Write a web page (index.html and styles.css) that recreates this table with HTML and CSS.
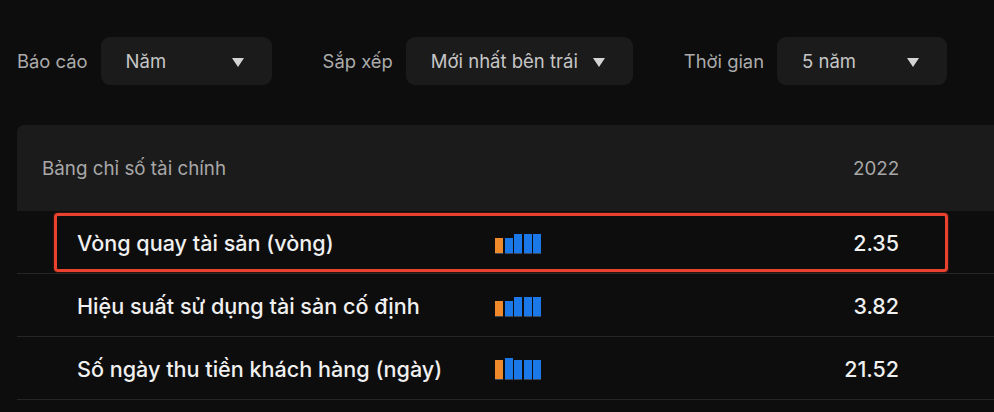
FILE: index.html
```html
<!DOCTYPE html>
<html lang="vi">
<head>
<meta charset="utf-8">
<title>Bảng chỉ số tài chính</title>
<link rel="stylesheet" href="styles.css">
</head>
<body>
<div class="page">
  <div class="filters">
    <div class="filter">
      <span class="filter-label">Báo cáo</span>
      <div class="select select-report"><span>Năm</span><span class="caret"></span></div>
    </div>
    <div class="filter">
      <span class="filter-label">Sắp xếp</span>
      <div class="select select-sort"><span>Mới nhất bên trái</span><span class="caret"></span></div>
    </div>
    <div class="filter">
      <span class="filter-label">Thời gian</span>
      <div class="select select-time"><span>5 năm</span><span class="caret"></span></div>
    </div>
  </div>

  <div class="table">
    <div class="thead">
      <span class="thead-title">Bảng chỉ số tài chính</span>
      <span class="thead-year">2022</span>
    </div>
    <div class="row">
      <div class="cell-box highlight">
        <span class="name">Vòng quay tài sản (vòng)</span>
        <span class="bars">
          <i class="bar orange" style="height:16px"></i><i class="bar" style="height:16px"></i><i class="bar" style="height:20px"></i><i class="bar" style="height:20px"></i><i class="bar" style="height:20px"></i>
        </span>
        <span class="value">2.35</span>
      </div>
    </div>
    <div class="row">
      <div class="cell-box">
        <span class="name">Hiệu suất sử dụng tài sản cố định</span>
        <span class="bars">
          <i class="bar orange" style="height:16px"></i><i class="bar" style="height:16px"></i><i class="bar" style="height:20px"></i><i class="bar" style="height:20px"></i><i class="bar" style="height:20px"></i>
        </span>
        <span class="value">3.82</span>
      </div>
    </div>
    <div class="row">
      <div class="cell-box">
        <span class="name">Số ngày thu tiền khách hàng (ngày)</span>
        <span class="bars">
          <i class="bar orange" style="height:20px"></i><i class="bar" style="height:22px"></i><i class="bar" style="height:20px"></i><i class="bar" style="height:20px"></i><i class="bar" style="height:20px"></i>
        </span>
        <span class="value">21.52</span>
      </div>
    </div>
  </div>
</div>
</body>
</html>
```

FILE: styles.css
```css
* { box-sizing: border-box; }

html, body {
  margin: 0;
  padding: 0;
  background: #0d0d0d;
  overflow: hidden;
}

body {
  font-family: Inter, "Noto Sans", "Liberation Sans", sans-serif;
  color: #e8e8e8;
  width: 994px;
  height: 412px;
}

.page {
  padding: 37px 0 0 17px;
}

.filters {
  display: flex;
  align-items: center;
  gap: 51px;
  height: 48px;
}

.filter {
  display: flex;
  align-items: center;
  gap: 13px;
  flex-shrink: 0;
}

.filter-label {
  font-size: 18.4px;
  color: #ababab;
  white-space: nowrap;
  flex-shrink: 0;
}

.select {
  height: 48px;
  background: #1b1b1b;
  border-radius: 9px;
  display: flex;
  align-items: center;
  justify-content: space-between;
  padding: 0 28px 0 25px;
  font-size: 18.5px;
  color: #c6c6c6;
  white-space: nowrap;
  flex-shrink: 0;
}

.select-report { width: 171px; }
.select-sort { width: 227px; }
.select-time { width: 170px; }

.caret {
  width: 0;
  height: 0;
  border-left: 6.5px solid transparent;
  border-right: 6.5px solid transparent;
  border-top: 9px solid #d4d4d4;
  margin-top: 2px;
}

.table {
  margin-top: 40px;
  width: 977px;
}

.thead {
  height: 86px;
  background: #1b1b1b;
  border-radius: 7px 0 0 0;
  display: flex;
  align-items: center;
  padding-left: 25px;
}

.thead-title {
  font-size: 18.8px;
  color: #a8a8a8;
  width: 811px;
}

.thead-year {
  font-size: 18.8px;
  color: #a8a8a8;
  width: 46px;
  text-align: right;
}

.row {
  height: 63px;
  border-bottom: 1px solid #262626;
  padding: 2px 0 1px 37px;
}

.cell-box {
  width: 894px;
  height: 59px;
  border: 3px solid transparent;
  border-radius: 4px;
  display: grid;
  grid-template-columns: 418px 1fr auto;
  align-items: center;
  padding: 0 46px 0 20px;
}

.cell-box.highlight {
  border-color: #e8412e;
  box-shadow: 0 0 2px rgba(232, 65, 46, 0.6);
}

.name {
  font-size: 21.6px;
  font-weight: 500;
  color: #f0f0f0;
  white-space: nowrap;
}

.bars {
  display: flex;
  align-items: flex-end;
  gap: 1.5px;
  height: 22px;
}

.bar {
  display: block;
  width: 8px;
  background: #1a78e8;
  border-bottom: 1px solid #3a4a5c;
}

.bar.orange {
  background: #ee8a2c;
}

.value {
  font-size: 21.4px;
  font-weight: 500;
  color: #f0f0f0;
  text-align: right;
}
```
